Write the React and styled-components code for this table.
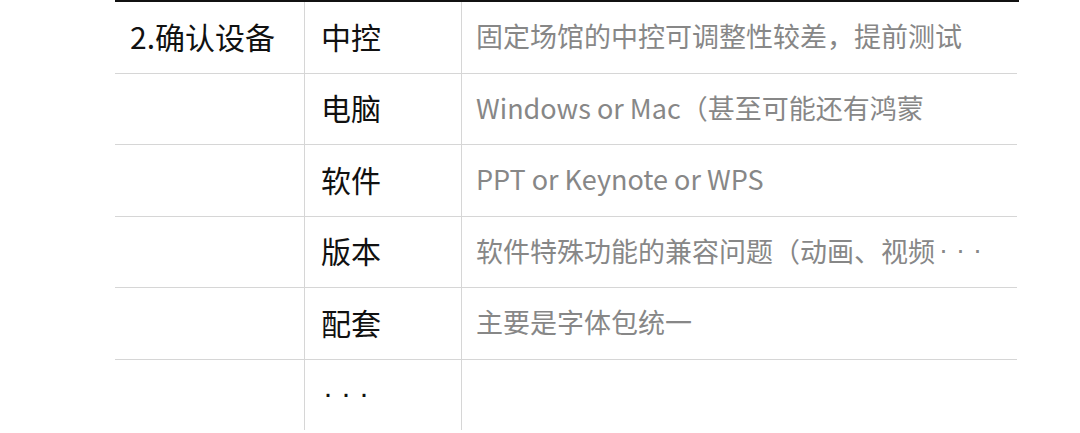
import React from 'react';
import styled, { createGlobalStyle } from 'styled-components';

const GlobalStyle = createGlobalStyle`
  html, body {
    margin: 0;
    padding: 0;
    background: #fff;
  }
  body {
    font-family: "Noto Sans CJK SC", "Noto Sans", sans-serif;
  }
`;

const rows = [
  { group: '2.确认设备', name: '中控', note: '固定场馆的中控可调整性较差，提前测试' },
  { name: '电脑', note: 'Windows or Mac（甚至可能还有鸿蒙' },
  { name: '软件', note: 'PPT or Keynote or WPS' },
  { name: '版本', note: '软件特殊功能的兼容问题（动画、视频', more: true },
  { name: '配套', note: '主要是字体包统一' },
  { name: '', note: '', dots: true },
];

const App = () => {
  return (
    <Page>
      <GlobalStyle />
      <Table>
        {rows.map((row, i) => (
          <Row key={i} last={i === rows.length - 1}>
            <GroupCell>{row.group}</GroupCell>
            <NameCell>{row.dots ? <Dots>···</Dots> : row.name}</NameCell>
            <NoteCell>
              {row.note}
              {row.more && <Dots small>···</Dots>}
            </NoteCell>
          </Row>
        ))}
      </Table>
    </Page>
  );
};

const Page = styled.div`
  width: 1080px;
  height: 433px;
  overflow: hidden;
  background: #fff;
`;

const Table = styled.div`
  margin-left: 115px;
  width: 904px;
  height: 429px;
  border-top: 2px solid #111;
`;

const Row = styled.div`
  display: grid;
  grid-template-columns: 189px 157px 1fr;
  height: ${p => (p.last ? '70px' : '71.5px')};
  box-sizing: border-box;
  border-bottom: ${p => (p.last ? 'none' : '1px solid #d6d6d6')};
  margin-right: ${p => (p.last ? '0' : '2px')};
`;

const Cell = styled.div`
  display: flex;
  align-items: center;
  padding-left: 16px;
  padding-bottom: 3px;
  line-height: 1;
  white-space: nowrap;
  overflow: hidden;
`;

const GroupCell = styled(Cell)`
  padding-left: 15px;
  font-size: 30px;
  color: #111;
`;

const NameCell = styled(Cell)`
  border-left: 1px solid #d6d6d6;
  font-size: 30px;
  color: #111;
`;

const NoteCell = styled(Cell)`
  border-left: 1px solid #d6d6d6;
  padding-left: 14px;
  font-size: 27px;
  color: #878787;
`;

const Dots = styled.span`
  letter-spacing: ${p => (p.small ? '8px' : '8px')};
  font-family: "Liberation Sans", sans-serif;
  font-size: ${p => (p.small ? '27px' : '30px')};
  margin-left: ${p => (p.small ? '4px' : '2px')};
`;

export default App;
